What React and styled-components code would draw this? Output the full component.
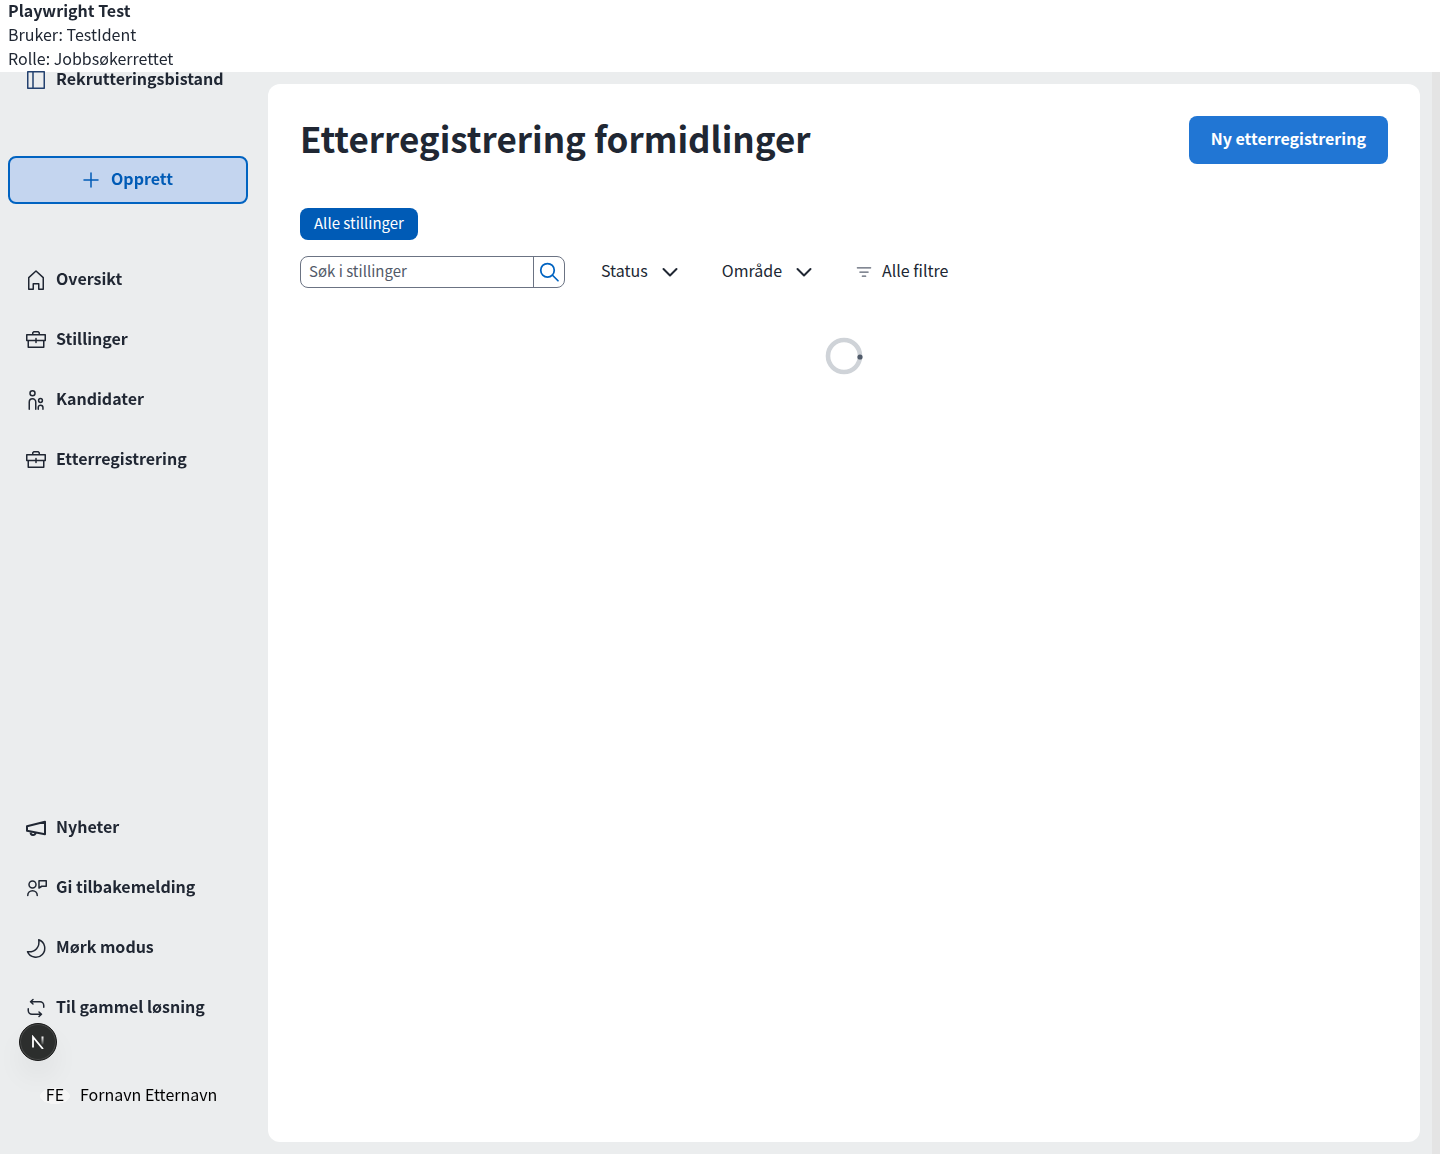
import React from "react";
import styled, { createGlobalStyle, css } from "styled-components";

const GlobalStyle = createGlobalStyle`
  *, *::before, *::after { box-sizing: border-box; }
  body {
    margin: 0;
    background: #ebedee;
    color: #202733;
    font-family: "Noto Sans CJK SC", "Noto Sans", sans-serif;
    font-size: 16px;
    line-height: 20px;
  }
  button, input { font: inherit; color: inherit; }
  button { cursor: pointer; }
`;

const Shell = styled.div`
  display: flex;
  min-height: 100vh;
  padding-top: 56px;
`;

const TestBanner = styled.header`
  position: fixed;
  inset: 0 0 auto 0;
  z-index: 2;
  padding: 0 8px;
  background: #fff;
`;

const BannerLine = styled.div`
  padding-bottom: 4px;
  font-weight: ${(p) => (p.$strong ? 700 : 400)};
`;

const Label = styled.span`
  padding-bottom: ${(p) => (p.$small ? 2 : 4)}px;
`;

const Sidebar = styled.aside`
  position: relative;
  z-index: 3;
  display: flex;
  flex-direction: column;
  flex: 0 0 256px;
  padding: 0 8px 46px;
`;

const NavGroup = styled.nav`
  display: flex;
  flex-direction: column;
  gap: 12px;
  margin-top: ${(p) => (p.$bottom ? "auto" : "52px")};
`;

const navRow = css`
  display: flex;
  align-items: center;
  gap: 8px;
  height: 48px;
  padding: 0 16px;
  border: 0;
  background: none;
  color: #202733;
  font-weight: 600;
  text-decoration: none;
  text-align: left;
`;

const NavLink = styled.a`${navRow}`;
const NavButton = styled.button`${navRow}`;

const CreateButton = styled.button`
  display: flex;
  align-items: center;
  justify-content: center;
  gap: 8px;
  height: 48px;
  margin-top: 52px;
  padding: 0 8px 0 4px;
  border: 2px solid #0063c1;
  border-radius: 8px;
  background: #c4d5ef;
  color: #005bb6;
  font-weight: 600;
`;

const UserRow = styled.div`
  display: flex;
  align-items: center;
  gap: 10px;
  margin-top: 52px;
  padding-left: 32px;
  color: #000;
`;

const Avatar = styled.span`
  width: 30px;
  padding-bottom: 4px;
  border-radius: 50%;
  background: radial-gradient(ellipse 15px 8px at 50% 50%, #f5f5f5 98%, transparent);
  text-align: center;
`;

const Icon = styled.svg`
  flex: none;
  width: ${(p) => p.$size || 24}px;
  height: ${(p) => p.$size || 24}px;
  fill: none;
  stroke: ${(p) => p.$color || "currentColor"};
  stroke-width: ${(p) => p.$weight || 1.5};
  stroke-linejoin: round;
  stroke-linecap: round;
`;

const Content = styled.div`
  flex: 1;
  min-width: 0;
  display: flex;
  padding: 28px 12px 12px;
`;

const Panel = styled.main`
  flex: 1;
  min-width: 0;
  padding: 32px;
  border-radius: 12px;
  background: #fff;
`;

const ScrollTrack = styled.div`
  flex: 0 0 8px;
  background: #e4e4e4;
`;

const PanelHead = styled.div`
  display: flex;
  align-items: center;
  justify-content: space-between;
  gap: 24px;
  min-height: 48px;
  margin-bottom: 44px;
`;

const Title = styled.h1`
  margin: 0;
  padding-bottom: 4px;
  font-size: 35px;
  line-height: 44px;
  font-weight: 600;
`;

const PrimaryButton = styled.button`
  display: flex;
  align-items: center;
  height: 48px;
  padding: 0 22px;
  border: 0;
  border-radius: 8px;
  background: #2176d4;
  color: #fff;
  font-weight: 600;
`;

const Chip = styled.button`
  display: flex;
  align-items: center;
  height: 32px;
  padding: 0 14px;
  border: 0;
  border-radius: 8px;
  background: #005bb6;
  color: #fff;
  font-size: 15px;
`;

const FilterBar = styled.div`
  display: flex;
  align-items: center;
  flex-wrap: wrap;
  gap: 24px;
  margin-top: 16px;
`;

const SearchForm = styled.form`
  display: flex;
  width: 265px;
  height: 32px;
  border: 1px solid #6b7383;
  border-radius: 8px;
  overflow: hidden;
`;

const SearchInput = styled.input`
  flex: 1;
  min-width: 0;
  padding: 0 8px 2px;
  border: 0;
  background: none;
  font-size: 15px;
  outline: 0;
  &::placeholder { color: #525a68; opacity: 1; }
`;

const SearchButton = styled.button`
  display: grid;
  place-items: center;
  width: 31px;
  padding: 0;
  border: 0;
  border-left: 1px solid #6b7383;
  background: none;
  color: #0063c1;
`;

const FilterButton = styled.button`
  display: flex;
  align-items: center;
  gap: ${(p) => (p.$leading ? 8 : 10)}px;
  height: 32px;
  padding: 0 4px 0 ${(p) => (p.$leading ? 10 : 12)}px;
  border: 0;
  background: none;
`;

const SpinnerRow = styled.div`
  display: flex;
  justify-content: center;
  margin-top: 48px;
`;

const DevBadge = styled.button`
  position: fixed;
  left: 19px;
  bottom: 93px;
  z-index: 4;
  display: grid;
  place-items: center;
  width: 38px;
  height: 38px;
  padding: 0;
  border: 1px solid #171717;
  border-radius: 50%;
  background: #2c2e2d;
  box-shadow: inset 0 0 0 1px #484a49, 0 16px 32px -8px rgba(0, 0, 0, 0.14);
`;

const shapes = {
  sidebar: <path d="M3.75 3.75h16.5v16.5H3.75zM9 3.75v16.5" />,
  plus: <path d="M12 5v14M5 12h14" />,
  house: <path d="M4.75 9.6 12 3l7.25 6.6v11.65h-4.5v-5.5h-5.5v5.5h-4.5z" />,
  briefcase: (
    <path d="M2.75 6.75h18.5v5.75H2.75zM4.25 12.5v6.75h15.5V12.5M8.75 6.75v-2l1-1h4.5l1 1v2M12 10.5v4" />
  ),
  people: (
    <>
      <circle cx="8.5" cy="5.25" r="2.5" />
      <path d="M5.25 21.25V14a3.25 3.25 0 0 1 6.5 0v7.25" />
      <circle cx="16.5" cy="12.5" r="1.9" />
      <path d="M14.25 21.25V19.5a2.35 2.35 0 0 1 4.7 0v1.75" />
    </>
  ),
  megaphone: <path d="M3 10.25 21 5.75v12.5L3 14.75zM6.5 15.75c0 4.5 5 4 5 1" />,
  feedback: (
    <>
      <circle cx="8.5" cy="8.5" r="3.5" />
      <path d="M3.75 19.5a4.75 4.75 0 0 1 9.5 0M15 4.75h7.25v5.5h-4.5L15 12z" />
    </>
  ),
  moon: <path d="M14.75 3.75A9 9 0 1 1 3.5 15.75c8 .75 12.5-5 11.25-12z" />,
  swap: (
    <path d="M6.5 5.75H16A3.75 3.75 0 0 1 19.75 9.5v1.75M9 3.5 6.5 5.75 9 8M17.5 18.25H8a3.75 3.75 0 0 1-3.75-3.75v-1.75M15 16l2.5 2.25L15 20.5" />
  ),
  search: (
    <>
      <circle cx="10.5" cy="10.25" r="6.75" />
      <path d="m15.5 15.25 5.5 5.5" />
    </>
  ),
  chevron: <path d="m5.5 9 6.5 6.5L18.5 9" />,
  filter: <path d="M4 7h16M7 12h10M10 17h4" />,
};

const Glyph = ({ name, size, color, weight }) => (
  <Icon viewBox="0 0 24 24" aria-hidden="true" $size={size} $color={color} $weight={weight}>
    {shapes[name]}
  </Icon>
);

const mainLinks = [
  ["Oversikt", "house"],
  ["Stillinger", "briefcase"],
  ["Kandidater", "people"],
  ["Etterregistrering", "briefcase"],
];

export default function App() {
  return (
    <>
      <GlobalStyle />
      <TestBanner>
        <BannerLine $strong>Playwright Test</BannerLine>
        <BannerLine>Bruker: TestIdent</BannerLine>
        <BannerLine>Rolle: Jobbsøkerrettet</BannerLine>
      </TestBanner>
      <Shell>
        <Sidebar>
          <NavButton type="button">
            <Glyph name="sidebar" color="#23416f" />
            <Label>Rekrutteringsbistand</Label>
          </NavButton>
          <CreateButton type="button">
            <Glyph name="plus" />
            <Label>Opprett</Label>
          </CreateButton>
          <NavGroup>
            {mainLinks.map(([label, icon]) => (
              <NavLink href="#" key={label}>
                <Glyph name={icon} />
                <Label>{label}</Label>
              </NavLink>
            ))}
          </NavGroup>
          <NavGroup $bottom>
            <NavButton type="button">
              <Glyph name="megaphone" weight={2} />
              <Label>Nyheter</Label>
            </NavButton>
            <NavButton type="button">
              <Glyph name="feedback" />
              <Label>Gi tilbakemelding</Label>
            </NavButton>
            <NavButton type="button">
              <Glyph name="moon" />
              <Label>Mørk modus</Label>
            </NavButton>
            <NavLink href="#">
              <Glyph name="swap" />
              <Label>Til gammel løsning</Label>
            </NavLink>
          </NavGroup>
          <UserRow>
            <Avatar>FE</Avatar>
            <Label>Fornavn Etternavn</Label>
          </UserRow>
        </Sidebar>
        <Content>
          <Panel>
            <PanelHead>
              <Title>Etterregistrering formidlinger</Title>
              <PrimaryButton type="button">
                <Label>Ny etterregistrering</Label>
              </PrimaryButton>
            </PanelHead>
            <Chip type="button" aria-pressed="true">
              <Label $small>Alle stillinger</Label>
            </Chip>
            <FilterBar>
              <SearchForm role="search" onSubmit={(e) => e.preventDefault()}>
                <SearchInput type="text" aria-label="Søk i stillinger" placeholder="Søk i stillinger" />
                <SearchButton type="submit" aria-label="Søk">
                  <Glyph name="search" weight={1.75} />
                </SearchButton>
              </SearchForm>
              <FilterButton type="button">
                <Label>Status</Label>
                <Glyph name="chevron" weight={2} />
              </FilterButton>
              <FilterButton type="button">
                <Label>Område</Label>
                <Glyph name="chevron" weight={2} />
              </FilterButton>
              <FilterButton type="button" $leading>
                <Glyph name="filter" size={20} color="#5a6170" />
                <Label>Alle filtre</Label>
              </FilterButton>
            </FilterBar>
            <SpinnerRow>
              <svg width="40" height="40" viewBox="0 0 40 40" role="img" aria-label="Laster">
                <circle cx="20" cy="20" r="16" fill="none" stroke="#cfd3d8" strokeWidth="4.6" />
                <circle cx="36" cy="21" r="2.6" fill="#515b6a" />
              </svg>
            </SpinnerRow>
          </Panel>
        </Content>
        <ScrollTrack />
      </Shell>
      <DevBadge type="button" aria-label="Next.js">
        <svg width="14" height="14" viewBox="0 0 14 14" fill="none" strokeWidth="1.8" aria-hidden="true">
          <defs>
            <linearGradient id="fade" x1="0" y1="0" x2="0" y2="1">
              <stop offset="0" stopColor="#fff" />
              <stop offset="1" stopColor="#fff" stopOpacity="0.1" />
            </linearGradient>
          </defs>
          <path d="M2 12.5V2l10 12" stroke="#fff" />
          <rect x="10.5" y="1.5" width="2" height="8" fill="url(#fade)" />
        </svg>
      </DevBadge>
    </>
  );
}
